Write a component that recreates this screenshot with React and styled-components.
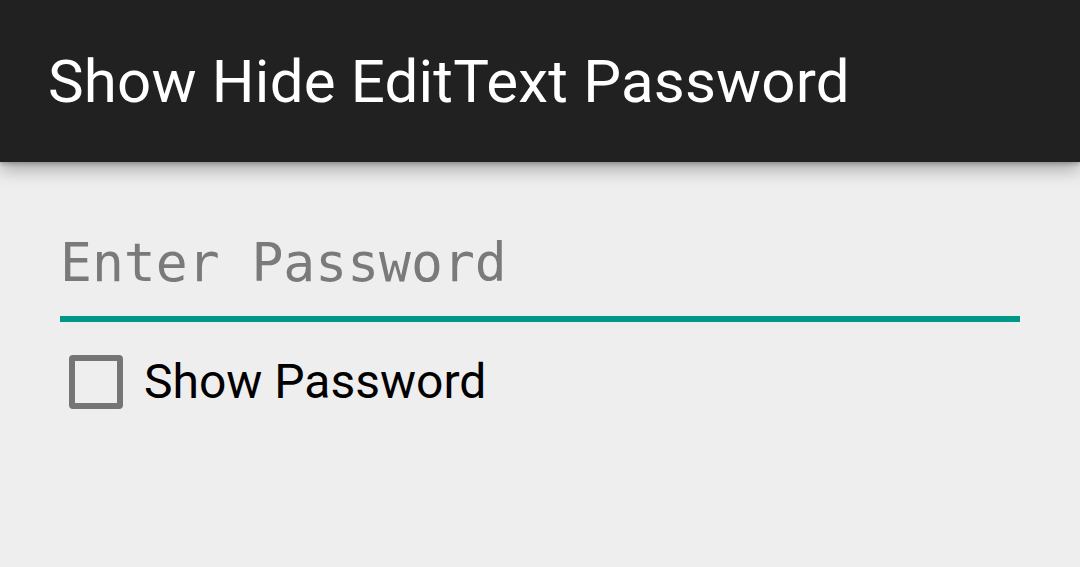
import React from "react";
import styled, { createGlobalStyle } from "styled-components";

const GlobalStyle = createGlobalStyle`
  html, body {
    margin: 0;
    padding: 0;
    background: #eeeeee;
  }
  body {
    font-family: Roboto, "Noto Sans", Arial, sans-serif;
  }
`;

const Screen = styled.div`
  width: 1080px;
  height: 567px;
  background: #eeeeee;
  overflow: hidden;
`;

const AppBar = styled.header`
  position: relative;
  z-index: 1;
  display: flex;
  align-items: center;
  height: 162px;
  padding: 0 48px;
  background: #212121;
  box-shadow: 0 8px 16px rgba(0, 0, 0, 0.28), 0 2px 4px rgba(0, 0, 0, 0.22);
`;

const Title = styled.h1`
  margin: 0;
  font-family: Roboto, sans-serif;
  font-size: 60px;
  font-weight: 400;
  letter-spacing: 0.2px;
  color: #ffffff;
`;

const Content = styled.main`
  display: flex;
  flex-direction: column;
  padding: 64px 60px 0 60px;
`;

const PasswordField = styled.input`
  box-sizing: content-box;
  width: 100%;
  height: 72px;
  margin: 0;
  padding: 0 0 18px 0;
  border: none;
  border-bottom: 6px solid #009688;
  background: transparent;
  outline: none;
  font-family: "DejaVu Sans Mono", "Liberation Mono", monospace;
  font-size: 53px;
  color: #212121;

  &::placeholder {
    color: #7a7a7a;
  }
`;

const CheckRow = styled.label`
  display: flex;
  align-items: center;
  gap: 21px;
  margin: 31px 0 0 9px;
  cursor: pointer;
`;

const Box = styled.span`
  box-sizing: border-box;
  width: 54px;
  height: 54px;
  border: 6px solid #757575;
  border-radius: 4px;
  background: ${(p) => (p.checked ? "#009688" : "transparent")};
  border-color: ${(p) => (p.checked ? "#009688" : "#757575")};
`;

const HiddenInput = styled.input`
  display: none;
`;

const Label = styled.span`
  font-family: Roboto, sans-serif;
  font-size: 48px;
  color: #000000;
`;

export default function App() {
  const [show, setShow] = React.useState(false);

  return (
    <Screen>
      <GlobalStyle />
      <AppBar>
        <Title>Show Hide EditText Password</Title>
      </AppBar>
      <Content>
        <PasswordField
          type={show ? "text" : "password"}
          placeholder="Enter Password"
        />
        <CheckRow>
          <HiddenInput
            type="checkbox"
            checked={show}
            onChange={(e) => setShow(e.target.checked)}
          />
          <Box checked={show} />
          <Label>Show Password</Label>
        </CheckRow>
      </Content>
    </Screen>
  );
}
